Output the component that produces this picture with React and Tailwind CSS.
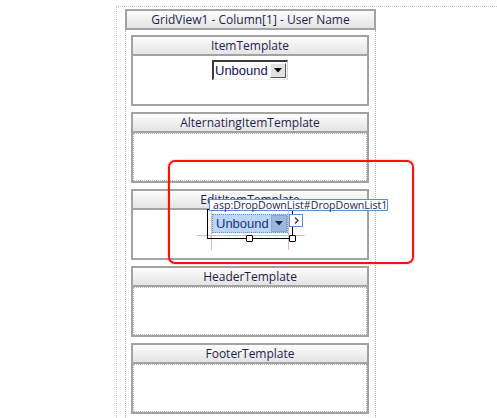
import React from 'react';

const font = { fontFamily: '"Open Sans", "Noto Sans", sans-serif' };

const TemplateBox = ({ title, children, dotted = true }) => (
    <div className="w-[238px] h-[71px] border-2 border-[#a3a3a3] bg-white flex flex-col">
        <div className="h-[19px] shrink-0 border-b-2 border-[#a3a3a3] bg-gradient-to-b from-[#fdfdfd] to-[#e4e4e4] flex items-center justify-center text-[12px] leading-none text-[#1e1e4e]">
            {title}
        </div>
        {dotted ? (
            <div className="flex-1 border border-dotted border-[#b4b4b4]"></div>
        ) : (
            <div className="flex-1 relative">{children}</div>
        )}
    </div>
);

const Dropdown = () => (
    <div className="w-[76px] h-[20px] flex items-stretch bg-white border-t-2 border-l-2 border-[#3c3c3c] border-r border-b border-r-[#cfcfcf] border-b-[#f0f0f0] pr-[1px] py-[1px]">
        <span className="flex-1 pl-[1px] text-[13px] leading-[16px] text-[#101060]" style={{ fontFamily: '"Liberation Sans", Arial, sans-serif' }}>Unbound</span>
        <span className="w-[16px] bg-[#e2e2e2] border border-t-white border-l-white border-r-[#555] border-b-[#555] flex items-center justify-center">
            <svg width="8" height="5" viewBox="0 0 8 5"><path d="M0 0h8L4 4.5z" fill="#000" /></svg>
        </span>
    </div>
);

const App = () => {
    return (
        <div className="relative w-[497px] h-[418px] bg-white overflow-hidden" style={font}>
            <div className="ml-[116px] mt-[6px] border-t border-l border-dotted border-[#c4c4c4] pl-[8px] pt-[2px] h-[420px]">
                <div className="w-[251px]">
                    {/* column header */}
                    <div className="h-[21px] border-2 border-[#a3a3a3] bg-gradient-to-b from-[#fdfdfd] to-[#e4e4e4] flex items-center justify-center text-[12px] leading-none text-[#1e1e4e]">
                        GridView1 - Column[1] - User Name
                    </div>

                    <div className="border-x border-dotted border-[#b4b4b4] pl-[5px] pt-[5px] pb-[20px] flex flex-col gap-[6px]">
                        <TemplateBox title="ItemTemplate" dotted={false}>
                            <div className="flex justify-center pt-[4px]">
                                <Dropdown />
                            </div>
                        </TemplateBox>

                        <TemplateBox title="AlternatingItemTemplate" />

                        <TemplateBox title="EditItemTemplate" dotted={false}>
                            <div className="flex justify-center pt-[4px]">
                                <div className="w-[76px] h-[19px] flex items-stretch border border-dotted border-[#6d8fbf] bg-[#bcd7f6]">
                                    <span className="flex-1 pl-[3px] text-[13px] leading-[17px] text-[#1c3575]" style={{ fontFamily: '"Liberation Sans", Arial, sans-serif' }}>Unbound</span>
                                    <span className="w-[16px] bg-[#9cb8dc] border border-[#8aa6cc] flex items-center justify-center">
                                        <svg width="8" height="5" viewBox="0 0 8 5"><path d="M0 0h8L4 4.5z" fill="#1b2a4a" /></svg>
                                    </span>
                                </div>
                            </div>

                            {/* guide lines */}
                            <div className="absolute left-[78px] top-[0px] w-px h-[40px] bg-[#e2b8b8]"></div>
                            <div className="absolute left-[155px] top-[-6px] w-px h-[46px] bg-[#e2b8b8]"></div>
                            <div className="absolute left-[64px] top-[25px] w-[108px] h-px bg-[#e2b8b8]"></div>

                            {/* selection frame */}
                            <div className="absolute left-[74px] top-[-1px] w-[86px] h-[30px] border border-black"></div>
                            <div className="absolute left-[113px] top-[25px] w-[7px] h-[7px] bg-white border border-black rounded-[1px]"></div>
                            <div className="absolute left-[156px] top-[25px] w-[7px] h-[7px] bg-white border border-black rounded-[1px]"></div>

                            {/* smart tag */}
                            <div className="absolute left-[156px] top-[4px] w-[14px] h-[13px] bg-white border border-[#5b8fd0] flex items-center justify-center">
                                <svg width="5" height="7" viewBox="0 0 5 7"><path d="M1 0.5L4 3.5L1 6.5" fill="none" stroke="#333" strokeWidth="1.2" /></svg>
                            </div>

                            {/* tag name tooltip */}
                            <div className="absolute left-[76px] top-[-11px] w-[179px] h-[12px] bg-white border border-[#5b8fd0] text-[10.6px] leading-[10px] text-[#1e1e4e] pl-[3px] whitespace-nowrap">
                                asp:DropDownList#DropDownList1
                            </div>
                        </TemplateBox>

                        <TemplateBox title="HeaderTemplate" />
                        <TemplateBox title="FooterTemplate" />
                    </div>
                </div>
            </div>

            {/* highlight */}
            <div className="absolute left-[168px] top-[160px] w-[246px] h-[104px] border-2 border-[#ff1010] rounded-[7px] shadow-[0_0_2px_rgba(255,0,0,0.45)]"></div>
        </div>
    );
};

export default App;
